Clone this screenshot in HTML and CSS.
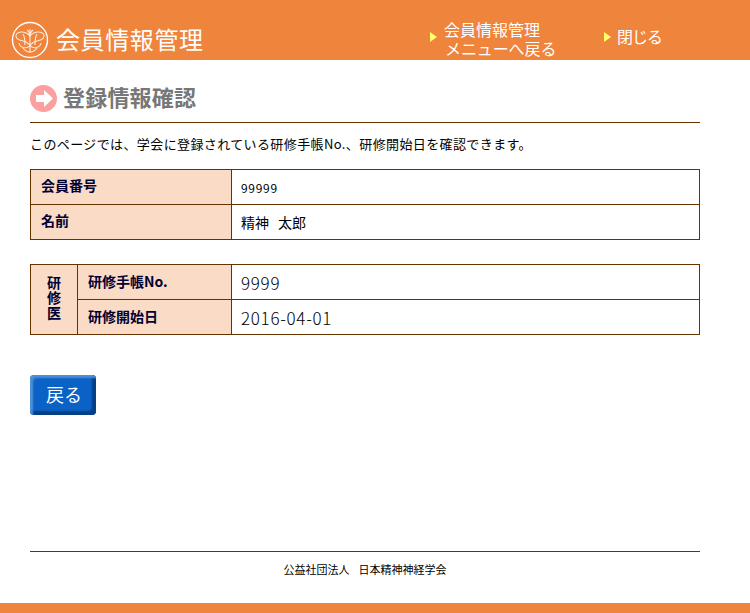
FILE: index.html
```html
<!DOCTYPE html>
<html lang="ja">
<head>
<meta charset="utf-8">
<title>登録情報確認</title>
<link rel="stylesheet" href="styles.css">
</head>
<body>
<header class="header">
  <div class="brand">
    <svg class="logo" width="38" height="38" viewBox="0 0 38 38" fill="none" stroke="#fff">
      <circle cx="19" cy="19" r="17.500" stroke-width="1.400"/>
      <g stroke="#ffe9d8" stroke-width="1.100">
        <path d="M19 15C15 10 8 10 5.500 13c-2 3 1 6 5 6.500 3 .5 5 1 8.500 4.500 3.500-3.500 5.500-4 8.500-4.500 4-.5 7-3.500 5-6.500-2.500-3-9.500-3-13.500 2z"/>
        <path d="M8 22c1 5 7 6 11 3 4 3 10 2 11-3M12 27c2 3 4 4 7 4s5-1 7-4"/>
        <path d="M19 8v24M16 9c3 2 3 5 3 8M22 9c-3 2-3 5-3 8M12 13c2 3 2 7 2 11M26 13c-2 3-2 7-2 11"/>
      </g>
    </svg>
    <span class="brand-title">会員情報管理</span>
  </div>
  <nav class="nav">
    <a class="nav-link nav-menu"><span class="tri"></span><span class="nav-text"><span class="nav-line">会員情報管理</span><span class="nav-line nav-second">メニューへ戻る</span></span></a>
    <a class="nav-link nav-close"><span class="tri"></span><span class="nav-text">閉じる</span></a>
  </nav>
</header>
<main class="main">
  <div class="heading">
    <svg class="heading-icon" width="27" height="27" viewBox="0 0 27 27">
      <circle cx="13.500" cy="13.500" r="13.500" fill="#fb9f9f"/>
      <path d="M6 10h8V5l9 8.500-9 8.500v-5H6z" fill="#fff"/>
    </svg>
    <h1 class="heading-text">登録情報確認</h1>
  </div>
  <p class="lead">このページでは、学会に登録されている研修手帳No.、研修開始日を確認できます。</p>
  <table class="tbl tbl-one">
    <tr class="row-35"><th class="th-wide">会員番号</th><td class="small">99999</td></tr>
    <tr class="row-35"><th class="th-wide">名前</th><td class="name"><span class="family">精神</span>太郎</td></tr>
  </table>
  <table class="tbl tbl-two">
    <tr class="row-35">
      <th class="th-group" rowspan="2"><span class="vert">研修医</span></th>
      <th class="th-sub">研修手帳No.</th><td class="big">9999</td>
    </tr>
    <tr class="row-35"><th class="th-sub">研修開始日</th><td class="big">2016-04-01</td></tr>
  </table>
  <button class="back" type="button">戻る</button>
</main>
<footer class="footer">
  <div class="copy"><span class="org">公益社団法人</span>日本精神神経学会</div>
  <div class="bar"></div>
</footer>
</body>
</html>
```
FILE: styles.css
```css
* { box-sizing: border-box; }
html, body { margin: 0; height: 613px; overflow: hidden; }
body {
  display: flex; flex-direction: column;
  background: #fff; color: #000;
  font-family: "Noto Sans CJK JP", "Liberation Sans", sans-serif;
}
.header {
  height: 60px; background: #ef843c;
  display: flex; justify-content: space-between;
  padding-left: 11px; color: #fff; flex: none;
}
.brand { display: flex; align-items: center; padding-top: 20px; gap: 7px; }
.logo { display: block; }
.brand-title { font-size: 24px; line-height: 30px; letter-spacing: .6px; margin-top: -2px; }
.nav { display: flex; padding-top: 20px; padding-right: 88px; }
.nav-link { display: flex; align-items: flex-start; color: #fff; font-size: 16px; line-height: 18px; }
.nav-menu { width: 174px; }
.tri {
  width: 0; height: 0; margin-top: 12px; margin-right: 7px;
  border-left: 7px solid #ffff66; border-top: 5.500px solid transparent; border-bottom: 5.500px solid transparent;
}
.nav-close .tri { margin-right: 6px; }
.nav-close .nav-text { padding-top: 7px; letter-spacing: -1px; }
.nav-text { display: block; white-space: nowrap; }
.nav-line { display: block; }
.nav-second { margin-left: 1px; margin-top: 1px; letter-spacing: -.1px; }
.main { flex: 1; padding: 24px 50px 0 30px; }
.heading {
  display: flex; align-items: center; gap: 6px;
  height: 39px; padding-bottom: 10px;
  border-bottom: 1px solid #663300;
}
.heading-icon { display: block; flex: none; }
.heading-text { margin: -4px 0 0; font-size: 22px; line-height: 28px; font-weight: 700; color: #777; letter-spacing: .2px; }
.lead { margin: 12px 0 0; font-size: 13px; line-height: 17px; letter-spacing: .39px; white-space: nowrap; }
.tbl { width: 670px; border-collapse: collapse; table-layout: fixed; }
.tbl th, .tbl td { border: 1px solid #663300; padding: 0; }
.tbl th { background: #fadbc5; font-size: 14px; font-weight: 700; text-align: left; color: #000033; }
.tbl td { padding-left: 9px; background: #fff; }
.tbl-one { margin-top: 17px; }
.tbl-two { margin-top: 24px; }
.row-35 { height: 35px; }
.th-wide { width: 201px; padding-left: 10px !important; padding-bottom: 4px !important; }
.th-group { width: 47px; text-align: center !important; padding-top: 2px !important; }
.vert { writing-mode: vertical-rl; letter-spacing: 1px; display: inline-block; line-height: 16px; }
.th-sub { width: 154px; padding-left: 10px !important; padding-bottom: 3px !important; }
.small { font-size: 12px; letter-spacing: .7px; padding-bottom: 3px; }
.name { font-size: 14px; padding-bottom: 3px; }
.family { margin-right: 9px; }
.big { font-size: 17px; letter-spacing: .7px; font-weight: 300; padding-bottom: 1px; }
.back {
  display: block; margin-top: 40px; width: 66px; height: 40px; padding: 0 0 2px 2px;
  background: #0a62c6; color: #fff; font: inherit; font-size: 18px;
  border: 0; border-radius: 4px;
  box-shadow: inset 3px 3px 2px #4f8fd6, inset -4px -4px 2px #053f85;
}
.footer { flex: none; }
.copy {
  margin: 0 50px 0 30px; height: 52px; padding-top: 9px;
  border-top: 1px solid #663300; font-size: 11px; line-height: 16px; text-align: center;
}
.org { margin-right: 9px; }
.bar { height: 10px; background: #ef843c; }
```
